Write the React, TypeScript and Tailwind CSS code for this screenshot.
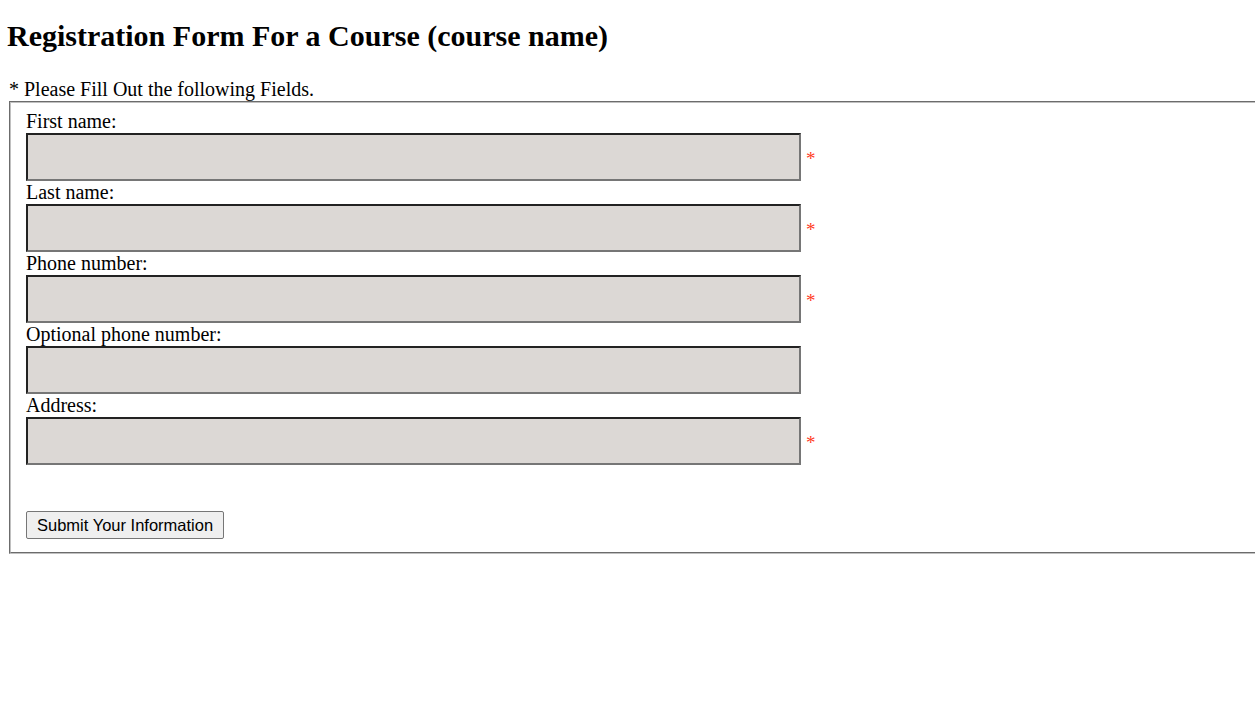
const fields = [
  { label: 'First name:', required: true },
  { label: 'Last name:', required: true },
  { label: 'Phone number:', required: true },
  { label: 'Optional phone number:', required: false },
  { label: 'Address:', required: true },
];

export default function App() {
  return (
    <div className="h-[723px] w-[1255px] overflow-hidden bg-white text-black font-['Liberation_Serif',serif]">
      <div className="pl-[7px] pt-[19px]">
        <h2 className="text-[30px] font-bold leading-[34px]">
          Registration Form For a Course (course name)
        </h2>
      </div>

      <p className="mt-[25px] pl-[9px] text-[20px] leading-[23px]">
        * Please Fill Out the following Fields.
      </p>

      <form className="ml-[9px] w-[1300px] border-2 border-[#c0c0c0] [border-style:groove] pl-[15px] pt-[7px] pb-[13px]">
        {fields.map((field) => (
          <div key={field.label}>
            <label className="block h-[23px] text-[20px] leading-[23px]">
              {field.label}
            </label>
            <div className="flex items-center">
              <input
                type="text"
                className="h-[48px] w-[775px] border-2 border-t-[#222] border-l-[#222] border-b-[#767676] border-r-[#767676] bg-[#dcd8d5] outline-none"
              />
              {field.required ? (
                <span className="ml-[5px] pt-[2px] text-[19px] leading-none text-[#ff3b1f]">
                  *
                </span>
              ) : null}
            </div>
          </div>
        ))}

        <div className="mt-[46px]">
          <button
            type="button"
            className="h-[28px] rounded-[2px] border border-[#767676] bg-[#efefef] px-[10px] text-[16.5px] leading-none text-black font-['Liberation_Sans',Arial,sans-serif]"
          >
            Submit Your Information
          </button>
        </div>
      </form>
    </div>
  );
}
